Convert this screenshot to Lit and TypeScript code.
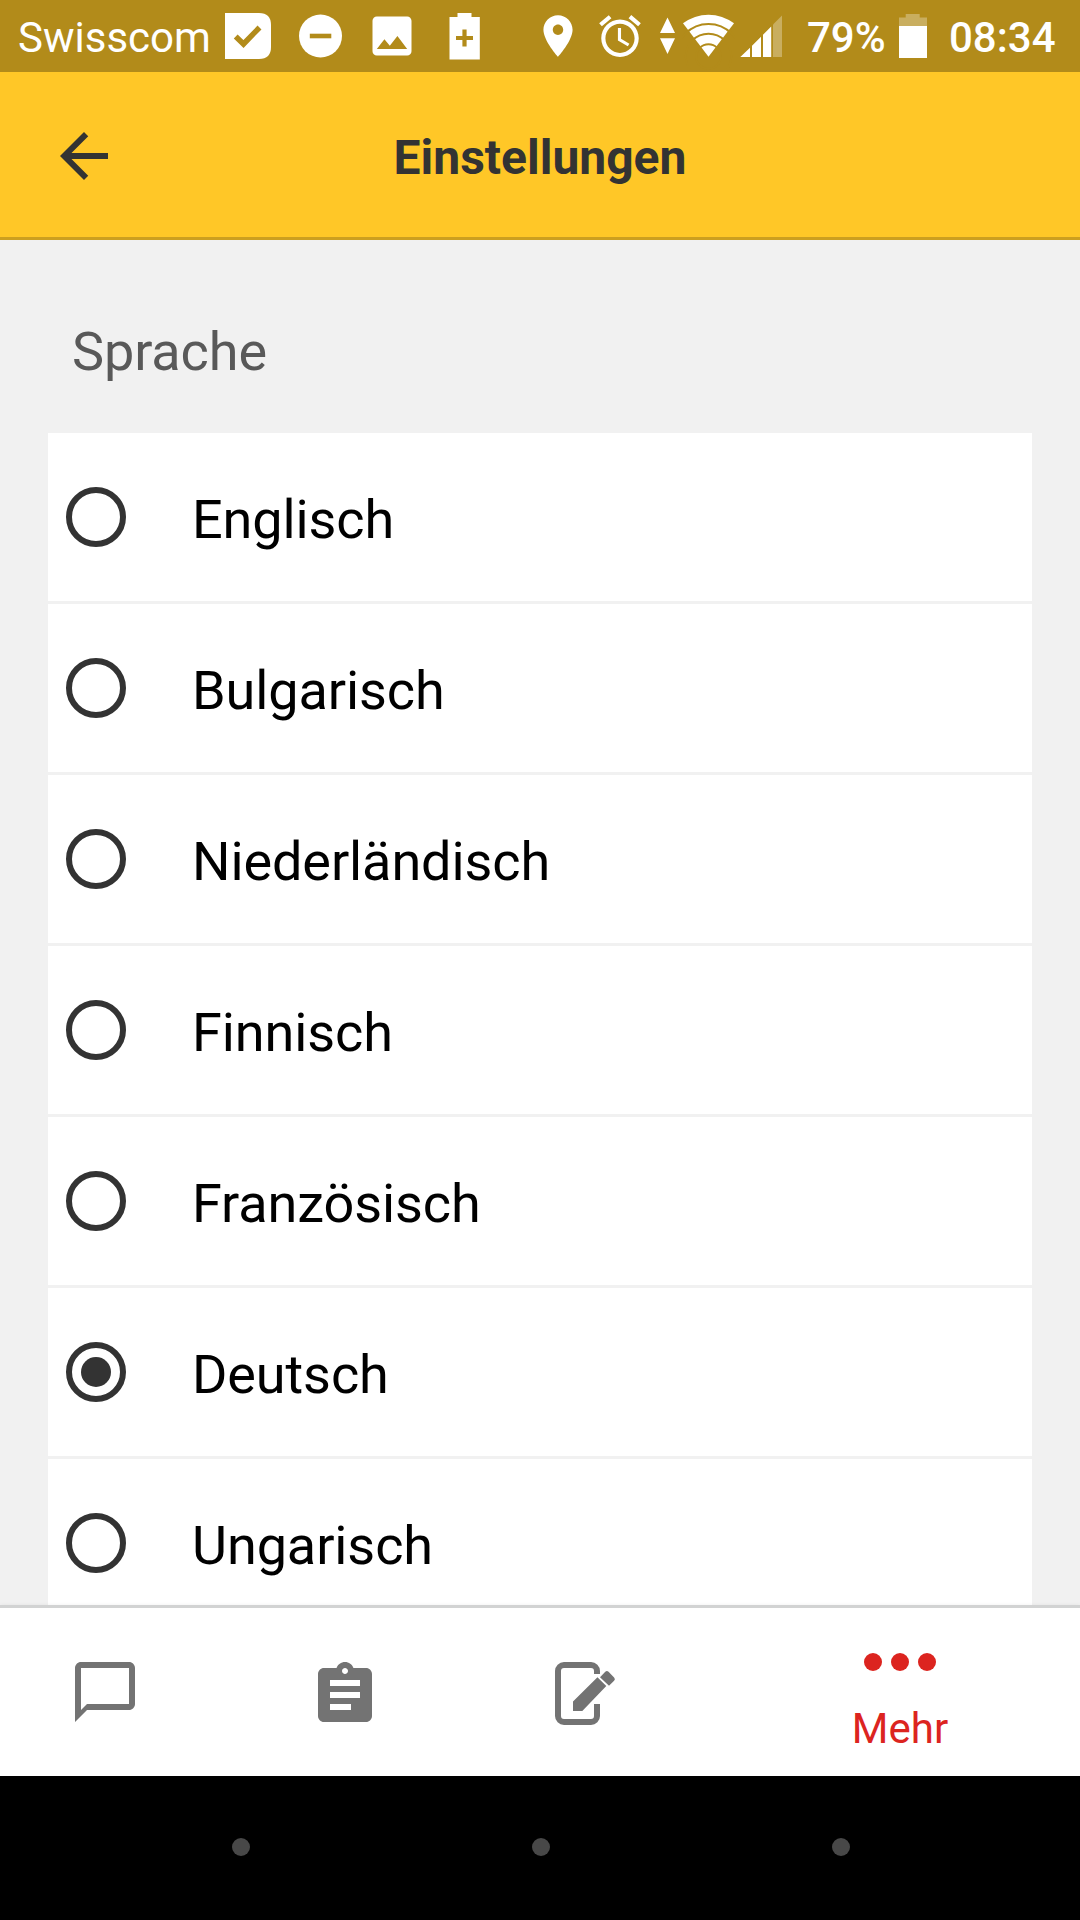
import { LitElement, html, svg, css } from "lit";
import { customElement, state, property } from "lit/decorators.js";
import { classMap } from "lit/directives/class-map.js";

@customElement("status-bar")
class StatusBar extends LitElement {
  static styles = css`
    :host {
      display: grid;
      grid-template-columns:
        207px 46px 27.5px 43px 24.5px 52px 30.5px 31px 53px 50px 12px 50px 14px
        17px 6.5px 53px 5px 42px 25px 92px 28px 22px 1fr;
      height: 72px;
      padding-left: 18px;
      box-sizing: border-box;
      background: #b28b1a;
      color: #fff;
      font-size: 42px;
      line-height: 75px;
      white-space: nowrap;
    }
    svg {
      display: block;
      fill: #fff;
      height: 72px;
      width: 100%;
    }
    .medium {
      font-weight: 500;
    }
    .cut {
      fill: #b28b1a;
    }
    .faded {
      fill: #c9ae5f;
    }
    .line {
      fill: none;
      stroke: #b28b1a;
    }
  `;

  render() {
    return html`
      <span>Swisscom</span>
      <svg viewBox="225 0 46 72">
        <path d="M225 13h34q12 0 12 12v22q0 12-12 12h-34z" />
        <path class="line" stroke-width="5.500" d="M235.700 36.500l7.800 7.500 16-16.500" />
      </svg>
      <i></i>
      <svg viewBox="298.500 0 43 72">
        <circle cx="320" cy="36" r="21.500" />
        <path class="cut" d="M309.300 33.700h21.500v4.600h-21.500z" />
      </svg>
      <i></i>
      <svg viewBox="0 -4.620 24 33.230">
        <path d="M21 19V5c0-1.100-.9-2-2-2H5c-1.100 0-2 .9-2 2v14c0 1.100.9 2 2 2h14c1.100 0 2-.9 2-2zM8.500 13.500l2.500 3.010L14.500 12l4.500 6H5l3.500-4.500z" />
      </svg>
      <i></i>
      <svg viewBox="448.500 0 31 72">
        <path d="M457 13h14v4h8.300v42.500H449V17h8z" />
        <path class="line" stroke-width="4.200" d="M455.500 38h17M464 29.500v17" />
      </svg>
      <i></i>
      <svg viewBox="0 -5.280 24 34.560">
        <path d="M12 2C8.130 2 5 5.130 5 9c0 5.250 7 13 7 13s7-7.750 7-13c0-3.870-3.130-7-7-7zm0 9.500c-1.380 0-2.500-1.120-2.500-2.500s1.120-2.500 2.500-2.500 2.500 1.120 2.500 2.500-1.120 2.500-2.500 2.500z" />
      </svg>
      <i></i>
      <svg viewBox="0 -5.400 24 34.560">
        <path d="M22 5.720l-4.600-3.860-1.290 1.530 4.600 3.860L22 5.720zM7.880 3.390L6.600 1.860 2 5.710l1.290 1.530 4.590-3.850zM12.500 8H11v6l4.750 2.850.75-1.230-4-2.370V8zM12 4c-4.970 0-9 4.030-9 9s4.020 9 9 9c4.970 0 9-4.030 9-9s-4.030-9-9-9zm0 16c-3.870 0-7-3.130-7-7s3.130-7 7-7 7 3.130 7 7-3.130 7-7 7z" />
      </svg>
      <i></i>
      <svg viewBox="659 0 17 72">
        <path d="M667.500 17.500l7.500 15.500h-15zM660 38.300h15l-7.500 15.700z" />
      </svg>
      <i></i>
      <svg viewBox="682 0 53 72">
        <path d="M683 23.300A42 42 0 0 1 734 23.300L708.500 56.700z" />
        <g class="line" stroke-width="1.900">
          <circle cx="708.500" cy="56.500" r="32.500" />
          <circle cx="708.500" cy="56.500" r="22.700" />
          <circle cx="708.500" cy="56.500" r="12.300" />
        </g>
      </svg>
      <i></i>
      <svg viewBox="740 0 42 72">
        <path d="M740.300 57l9.700-9.300V57zM752 45.700l9-8.900V57h-9zM763 34.800l8.200-8.300V57H763z" />
        <path class="faded" d="M773 24.600l9-9V57h-9z" />
      </svg>
      <i></i>
      <span class="medium">79%</span>
      <svg viewBox="899 0 28 72">
        <path class="faded" d="M905.700 14h14v3.500h7.300V26h-28v-8.500h6.700z" />
        <path d="M899 26h28v32h-28z" />
      </svg>
      <i></i>
      <span class="medium">08:34</span>
    `;
  }
}

@customElement("language-row")
class LanguageRow extends LitElement {
  @property() label = "";
  @property({ type: Boolean }) selected = false;

  static styles = css`
    .row {
      display: grid;
      grid-template-columns: 60px 1fr;
      column-gap: 66px;
      align-items: center;
      height: 168px;
      padding-left: 18px;
      background: #fff;
      color: #000;
      font-size: 54px;
      letter-spacing: -0.1px;
      cursor: pointer;
    }
    .radio {
      display: grid;
      place-items: center;
      box-sizing: border-box;
      width: 60px;
      height: 60px;
      border: 6px solid #333;
      border-radius: 50%;
    }
    .radio.on::after {
      content: "";
      width: 30px;
      height: 30px;
      border-radius: 50%;
      background: #333;
    }
    .label {
      padding-top: 5px;
    }
  `;

  render() {
    return html`<div class="row">
      <span class=${classMap({ radio: true, on: this.selected })}></span>
      <span class="label">${this.label}</span>
    </div>`;
  }
}

const tabIcons = [
  svg`<path d="M20 2H4c-1.100 0-2 .9-2 2v18l4-4h14c1.100 0 2-.9 2-2V4c0-1.100-.9-2-2-2zm0 14H6l-2 2V4h16v12z"/>`,
  svg`<path transform="translate(0 1)" d="M19 3h-4.180C14.400 1.840 13.300 1 12 1c-1.300 0-2.400.84-2.820 2H5c-1.100 0-2 .9-2 2v14c0 1.100.9 2 2 2h14c1.100 0 2-.9 2-2V5c0-1.100-.9-2-2-2zm-7 0c.55 0 1 .45 1 1s-.45 1-1 1-1-.45-1-1 .45-1 1-1zm2 14H7v-2h7v2zm3-4H7v-2h10v2zm0-4H7V7h10v2z"/>`,
  svg`<path d="M17 6V5a3 3 0 0 0-3-3H5a3 3 0 0 0-3 3v15a3 3 0 0 0 3 3h9a3 3 0 0 0 3-3v-4h-2v4a1 1 0 0 1-1 1H5a1 1 0 0 1-1-1V5a1 1 0 0 1 1-1h9a1 1 0 0 1 1 1v1z"/>
    <path d="M8 18.300v-3.100l8.150-8.100 2.950 2.900-8 8.300zM17 7.100l1.750-1.850q.55-.5 1.100 0l1.850 1.900q.55.55 0 1.100L20 9.900z"/>`,
];

@customElement("app-root")
class AppRoot extends LitElement {
  @state() private selected = "Deutsch";
  private languages = [
    "Englisch",
    "Bulgarisch",
    "Niederländisch",
    "Finnisch",
    "Französisch",
    "Deutsch",
    "Ungarisch",
  ];

  static styles = css`
    :host {
      display: flex;
      flex-direction: column;
      width: 1080px;
      height: 1920px;
      overflow: hidden;
      background: #f1f1f1;
      font-family: Roboto, sans-serif;
    }
    .header {
      display: grid;
      grid-template-columns: 72px 1fr 72px;
      align-items: center;
      flex: none;
      box-sizing: border-box;
      height: 168px;
      padding: 0 48px;
      background: #ffc727;
      border-bottom: 3px solid #cc9f1f;
    }
    .back {
      width: 72px;
      height: 72px;
      padding-top: 3px;
      fill: #333;
    }
    .title {
      margin: 0;
      padding-top: 5px;
      text-align: center;
      font-size: 48px;
      font-weight: 700;
      color: #333;
    }
    .content {
      flex: 1;
      min-height: 0;
      overflow: hidden;
      padding: 0 48px;
    }
    .section {
      margin: 0;
      height: 193px;
      line-height: 223px;
      padding-left: 24px;
      font-size: 54px;
      font-weight: 400;
      letter-spacing: -0.1px;
      color: #595959;
    }
    .list {
      display: flex;
      flex-direction: column;
      gap: 3px;
    }
    .tabs {
      display: grid;
      grid-template-columns: repeat(3, 240px) 1fr;
      flex: none;
      box-sizing: border-box;
      height: 171px;
      background: #fff;
      border-top: 3px solid #d2d3d3;
      box-shadow: 0 0 4px rgba(0, 0, 0, 0.06);
    }
    .tab {
      padding: 48px 0 0 69px;
    }
    .tab svg {
      display: block;
      width: 72px;
      height: 72px;
      fill: #737373;
    }
    .more {
      display: flex;
      flex-direction: column;
      align-items: center;
      padding-top: 45px;
      color: #dc241f;
      font-size: 42px;
      line-height: 50px;
    }
    .dots {
      display: flex;
      gap: 9px;
      margin-bottom: 33px;
    }
    .dots i {
      width: 18px;
      height: 18px;
      border-radius: 50%;
      background: #dc241f;
    }
    .system {
      display: flex;
      justify-content: center;
      gap: 282px;
      flex: none;
      box-sizing: border-box;
      height: 144px;
      padding: 62px 0 0 2px;
      background: #000;
    }
    .system i {
      width: 18px;
      height: 18px;
      border-radius: 50%;
      background: #484848;
    }
  `;

  render() {
    return html`
      <status-bar></status-bar>
      <header class="header">
        <svg class="back" viewBox="0 0 24 24">
          <path d="M20 11H7.830l5.590-5.590L12 4l-8 8 8 8 1.410-1.410L7.830 13H20v-2z" />
        </svg>
        <h1 class="title">Einstellungen</h1>
      </header>
      <main class="content">
        <h2 class="section">Sprache</h2>
        <div class="list">
          ${this.languages.map(
            (name) => html`<language-row
              .label=${name}
              .selected=${name === this.selected}
              @click=${() => (this.selected = name)}
            ></language-row>`
          )}
        </div>
      </main>
      <nav class="tabs">
        ${tabIcons.map(
          (icon) => html`<div class="tab"><svg viewBox="0 0 24 24">${icon}</svg></div>`
        )}
        <div class="more">
          <div class="dots"><i></i><i></i><i></i></div>
          <span>Mehr</span>
        </div>
      </nav>
      <div class="system"><i></i><i></i><i></i></div>
    `;
  }
}
